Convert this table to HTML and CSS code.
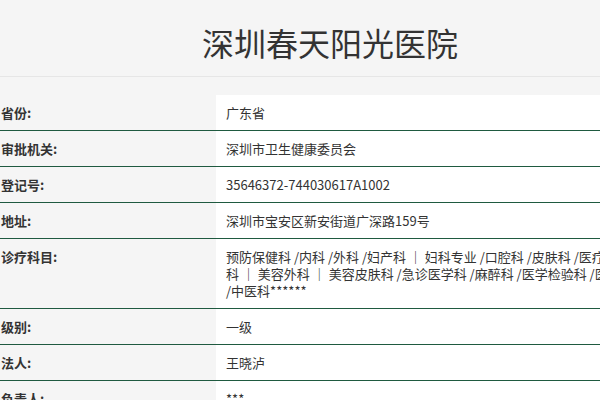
FILE: index.html
```html
<!DOCTYPE html>
<html lang="zh-CN">
<head>
<meta charset="utf-8">
<title>深圳春天阳光医院</title>
<link rel="stylesheet" href="styles.css">
</head>
<body>
<div class="page">
  <header class="head">
    <h1 class="title">深圳春天阳光医院</h1>
  </header>
  <div class="info">
    <div class="row"><div class="label">省份:</div><div class="value">广东省</div></div>
    <div class="row"><div class="label">审批机关:</div><div class="value">深圳市卫生健康委员会</div></div>
    <div class="row"><div class="label">登记号:</div><div class="value">35646372-744030617A1002</div></div>
    <div class="row"><div class="label">地址:</div><div class="value">深圳市宝安区新安街道广深路159号</div></div>
    <div class="row"><div class="label">诊疗科目:</div><div class="value value-lines">预防保健科 /内科 /外科 /妇产科 ｜ 妇科专业 /口腔科 /皮肤科 /医疗美容<br>科 ｜ 美容外科 ｜ 美容皮肤科 /急诊医学科 /麻醉科 /医学检验科 /医学影像科<br>/中医科******</div></div>
    <div class="row"><div class="label">级别:</div><div class="value">一级</div></div>
    <div class="row"><div class="label">法人:</div><div class="value">王晓泸</div></div>
    <div class="row"><div class="label">负责人:</div><div class="value">***</div></div>
  </div>
</div>
</body>
</html>
```
FILE: styles.css
```css
html, body {
  margin: 0;
  padding: 0;
  background: #f5f5f5;
  overflow: hidden;
}
body {
  font-family: "Microsoft YaHei", "Noto Sans CJK SC", "Noto Sans", sans-serif;
  color: #333;
}
.page {
  width: 660px;
}
.head {
  height: 76px;
  border-bottom: 1px solid #e6e6e6;
  display: flex;
  align-items: center;
  justify-content: center;
}
.title {
  margin: 8px 0 0;
  font-size: 32px;
  font-weight: normal;
  line-height: 40px;
  color: #333;
}
.info {
  margin-top: 18px;
}
.row {
  display: grid;
  grid-template-columns: 216px 1fr;
  border-bottom: 1px solid #1f5a40;
}
.label {
  font-size: 13px;
  font-weight: bold;
  line-height: 17px;
  padding: 9px 0 9px 1px;
  color: #333;
}
.value {
  background: #fff;
  font-size: 13px;
  line-height: 17px;
  padding: 9px 10px;
  color: #333;
}
.value-lines {
  white-space: nowrap;
  overflow: hidden;
}
```
